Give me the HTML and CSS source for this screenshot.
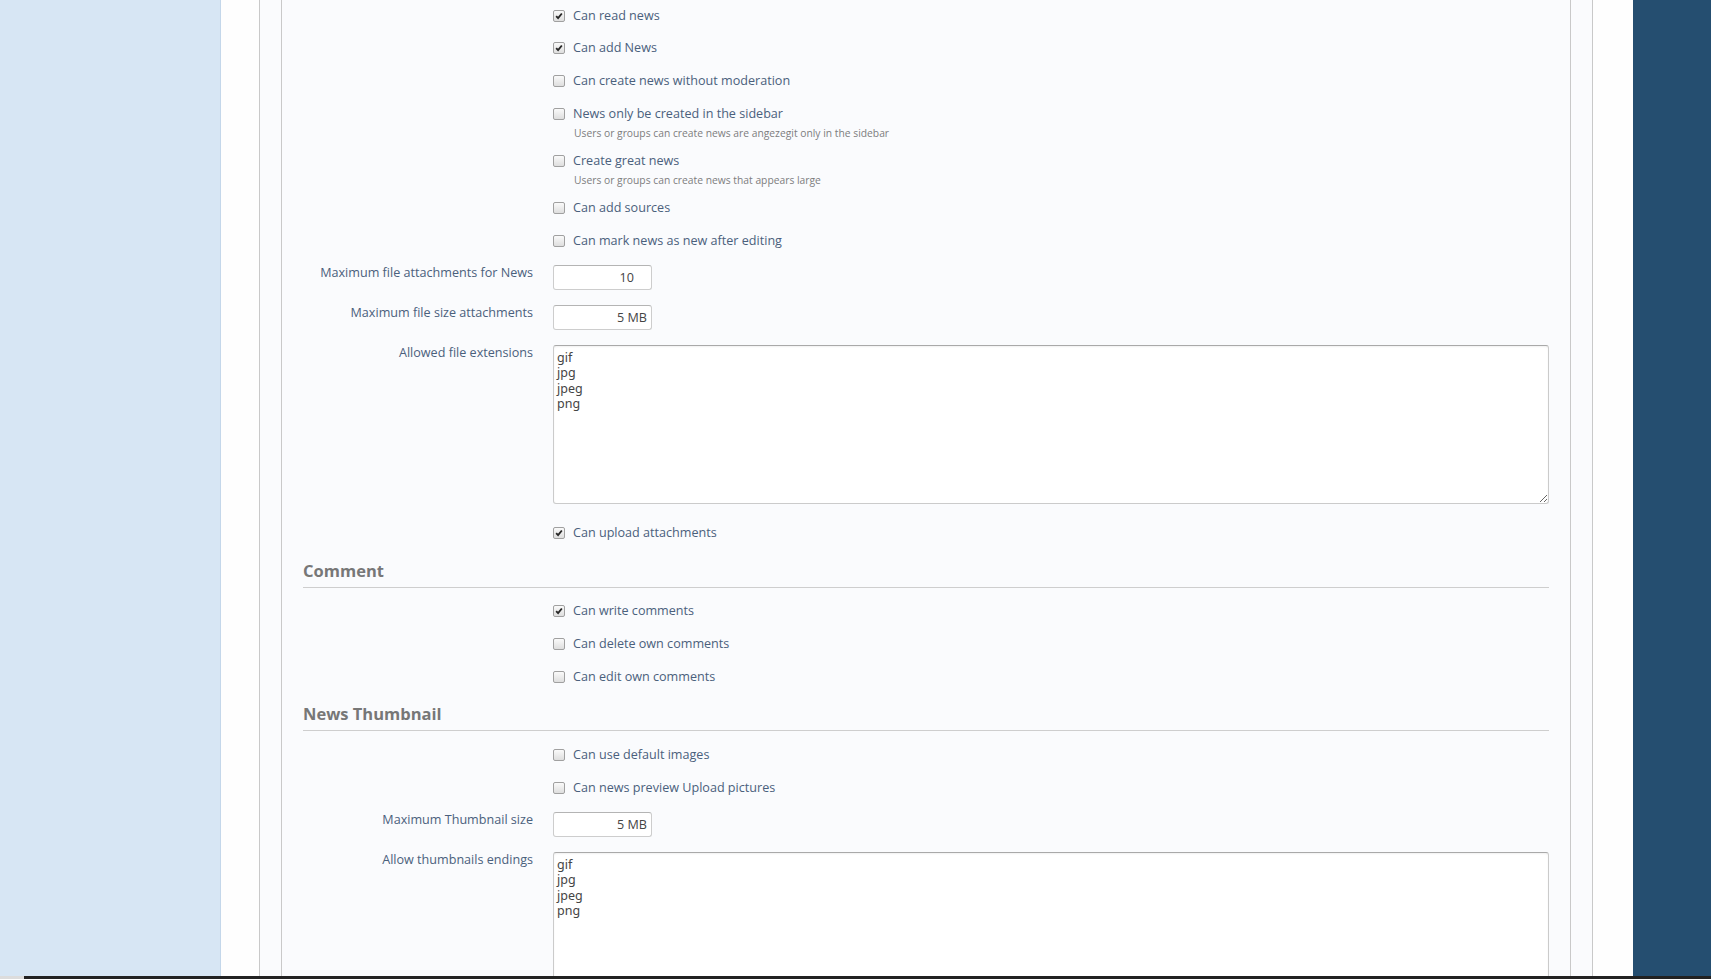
FILE: index.html
```html
<!DOCTYPE html>
<html lang="en">
<head>
  <meta charset="UTF-8">
  <meta name="viewport" content="width=device-width, initial-scale=1.0">
  <title>News permissions</title>
  <link rel="stylesheet" href="styles.css">
</head>
<body>
  <div class="screen">
    <aside class="side-left"></aside>
    <div class="gutter"></div>

    <div class="page">
      <div class="page-inner">
        <form class="perm-form">

          <div class="ctrl">
            <div></div>
            <label class="check"><span class="box on"><svg viewBox="0 0 12 12"><path d="M2.6 6.2 L4.9 8.6 L9.4 3"/></svg></span>Can read news</label>
          </div>
          <div class="ctrl">
            <div></div>
            <label class="check"><span class="box on"><svg viewBox="0 0 12 12"><path d="M2.6 6.2 L4.9 8.6 L9.4 3"/></svg></span>Can add News</label>
          </div>
          <div class="ctrl">
            <div></div>
            <label class="check"><span class="box"></span>Can create news without moderation</label>
          </div>
          <div class="ctrl">
            <div></div>
            <div>
              <label class="check"><span class="box"></span>News only be created in the sidebar</label>
              <p class="hint">Users or groups can create news are angezegit only in the sidebar</p>
            </div>
          </div>
          <div class="ctrl">
            <div></div>
            <div>
              <label class="check"><span class="box"></span>Create great news</label>
              <p class="hint">Users or groups can create news that appears large</p>
            </div>
          </div>
          <div class="ctrl">
            <div></div>
            <label class="check"><span class="box"></span>Can add sources</label>
          </div>
          <div class="ctrl">
            <div></div>
            <label class="check"><span class="box"></span>Can mark news as new after editing</label>
          </div>

          <div class="ctrl ctrl-input">
            <label class="ctrl-label">Maximum file attachments for News</label>
            <div><input class="num num-spin" type="text" value="10"></div>
          </div>
          <div class="ctrl ctrl-input">
            <label class="ctrl-label">Maximum file size attachments</label>
            <div><input class="num" type="text" value="5 MB"></div>
          </div>
          <div class="ctrl ctrl-area">
            <label class="ctrl-label">Allowed file extensions</label>
            <div><textarea class="ext-list">gif
jpg
jpeg
png</textarea></div>
          </div>
          <div class="ctrl">
            <div></div>
            <label class="check"><span class="box on"><svg viewBox="0 0 12 12"><path d="M2.6 6.2 L4.9 8.6 L9.4 3"/></svg></span>Can upload attachments</label>
          </div>

          <h3 class="section-head">Comment</h3>

          <div class="ctrl">
            <div></div>
            <label class="check"><span class="box on"><svg viewBox="0 0 12 12"><path d="M2.6 6.2 L4.9 8.6 L9.4 3"/></svg></span>Can write comments</label>
          </div>
          <div class="ctrl">
            <div></div>
            <label class="check"><span class="box"></span>Can delete own comments</label>
          </div>
          <div class="ctrl">
            <div></div>
            <label class="check"><span class="box"></span>Can edit own comments</label>
          </div>

          <h3 class="section-head">News Thumbnail</h3>

          <div class="ctrl">
            <div></div>
            <label class="check"><span class="box"></span>Can use default images</label>
          </div>
          <div class="ctrl">
            <div></div>
            <label class="check"><span class="box"></span>Can news preview Upload pictures</label>
          </div>
          <div class="ctrl ctrl-input">
            <label class="ctrl-label">Maximum Thumbnail size</label>
            <div><input class="num" type="text" value="5 MB"></div>
          </div>
          <div class="ctrl ctrl-area">
            <label class="ctrl-label">Allow thumbnails endings</label>
            <div><textarea class="ext-list">gif
jpg
jpeg
png</textarea></div>
          </div>

        </form>
      </div>
    </div>

    <div class="gutter gutter-right"></div>
    <aside class="side-right"></aside>
  </div>
  <div class="taskbar"><span class="taskbar-start"></span></div>
</body>
</html>
```

FILE: styles.css
```css
body {
  margin: 0;
  font-family: "Open Sans", "Liberation Sans", sans-serif;
  font-size: 12.6px;
  color: #4a607c;
  background-color: #fefefe;
  overflow: hidden;
}
.screen {
  display: flex;
  height: 976px;
  overflow: hidden;
}
.side-left {
  width: 220px;
  flex: none;
  background-color: #d7e6f4;
  border-right: 1px solid #c4d7ea;
}
.gutter {
  width: 38px;
  flex: none;
  background-color: #fefefe;
}
.gutter-right {
  width: 40px;
}
.side-right {
  width: 78px;
  flex: none;
  background-color: #254e70;
}
.page {
  flex: none;
  display: flex;
  padding: 0 21px;
  background-color: #fafbfd;
  border-left: 1px solid #c9c9c9;
  border-right: 1px solid #c9c9c9;
}
.page-inner {
  width: 1288px;
  border-left: 1px solid #c9c9c9;
  border-right: 1px solid #c9c9c9;
  background-color: #fafbfd;
}
.perm-form {
  display: flex;
  flex-direction: column;
  padding: 5.5px 21px 0;
}
.ctrl {
  display: grid;
  grid-template-columns: 230px 1fr;
  column-gap: 20px;
  margin-bottom: 12.8px;
}
.ctrl-input {
  margin-bottom: 13.6px;
}
.ctrl-area {
  margin-bottom: 19.3px;
}
.ctrl-label {
  text-align: right;
  line-height: 20px;
  margin-top: -1px;
}
.check {
  display: flex;
  align-items: center;
  height: 20px;
  line-height: 20px;
  white-space: nowrap;
}
.box {
  width: 12px;
  height: 12px;
  box-sizing: border-box;
  flex: none;
  margin-right: 8px;
  border: 1px solid #a0a0a0;
  border-radius: 2px;
  background: linear-gradient(#fafafa, #dedede);
}
.box svg {
  display: block;
  width: 10px;
  height: 10px;
}
.box svg path {
  fill: none;
  stroke: #262626;
  stroke-width: 2.2;
}
.hint {
  margin: 2.5px 0 -2.5px 21px;
  font-size: 10.3px;
  line-height: 14.3px;
  color: #7d7d7d;
}
.num {
  display: block;
  width: 99px;
  height: 25px;
  box-sizing: border-box;
  margin: 1.4px 0 0;
  padding: 0 4px 0 4px;
  border: 1px solid #cdcdcd;
  border-top-color: #b4b4b4;
  border-radius: 3px;
  background-color: #fff;
  font-family: "Open Sans", "Liberation Sans", sans-serif;
  font-size: 12.6px;
  color: #444;
  text-align: right;
}
.num-spin {
  padding-right: 17px;
}
.ext-list {
  display: block;
  width: 100%;
  height: 159px;
  box-sizing: border-box;
  margin: 1.4px 0 0;
  padding: 4px 3px 2px;
  border: 1px solid #cbcbcb;
  border-top-color: #a9a9a9;
  border-radius: 3px;
  box-shadow: inset 0 1px 2px rgba(0, 0, 0, 0.06);
  background-color: #fff;
  font-family: "Noto Sans", "DejaVu Sans", sans-serif;
  font-size: 12.5px;
  line-height: 15.3px;
  color: #444;
  resize: vertical;
}
.section-head {
  margin: 2.4px 0 13.6px;
  padding: 0 0 4.3px;
  border-bottom: 1px solid #cecece;
  font-size: 16.5px;
  font-weight: bold;
  line-height: 24px;
  color: #777;
}
.taskbar {
  display: flex;
  height: 3px;
  background-color: #222;
}
.taskbar-start {
  width: 24px;
  background-color: #dcdcdc;
}
```
